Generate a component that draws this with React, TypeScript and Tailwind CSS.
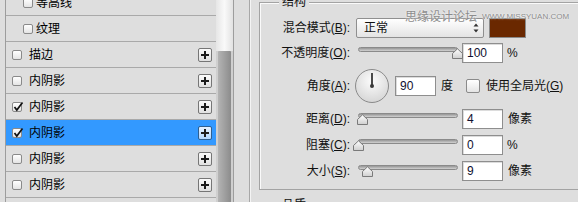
import React from "react";

type Row = {
  label: string;
  indent?: boolean;
  checked?: boolean;
  selected?: boolean;
  plus?: boolean;
};

const rows: Row[] = [
  { label: "等高线", indent: true },
  { label: "纹理", indent: true },
  { label: "描边", plus: true },
  { label: "内阴影", plus: true },
  { label: "内阴影", checked: true, plus: true },
  { label: "内阴影", checked: true, selected: true, plus: true },
  { label: "内阴影", plus: true },
  { label: "内阴影", plus: true },
];

function CheckBox({ checked, big }: { checked?: boolean; big?: boolean }) {
  return (
    <div
      className={`relative shrink-0 rounded-[2px] border border-[#8a8a8a] bg-gradient-to-b from-[#ffffff] to-[#e4e4e4] ${
        big ? "h-[14px] w-[14px]" : "h-[10px] w-[10px]"
      }`}
    >
      {checked && (
        <svg className="absolute left-[0px] top-[-2px] overflow-visible" width="11" height="11" viewBox="0 0 11 11">
          <path d="M1.5 6 L3.8 9 L9.5 1.5" fill="none" stroke="#111" strokeWidth="1.7" />
        </svg>
      )}
    </div>
  );
}

function PlusButton({ active }: { active?: boolean }) {
  return (
    <div
      className={`ml-auto mr-[4px] flex h-[14px] w-[14px] items-center justify-center rounded-[2px] border ${
        active
          ? "border-[#2f5f8f] bg-gradient-to-b from-[#e6f2ff] to-[#b2d7ff]"
          : "border-[#767676] bg-gradient-to-b from-[#fbfbfb] to-[#e0e0e0]"
      }`}
    >
      <svg width="10" height="10" viewBox="0 0 10 10">
        <path d="M5 1v8M1 5h8" stroke="#1c1c1c" strokeWidth="2" />
      </svg>
    </div>
  );
}

function Label({ text, k, w = "w-[90px]" }: { text: string; k: string; w?: string }) {
  return (
    <div className={`${w} shrink-0 text-right text-[12px] text-[#111]`}>
      {text}(<span className="underline">{k}</span>):
    </div>
  );
}

function Field({ value }: { value: string }) {
  return (
    <div className="flex h-[20px] w-[41px] shrink-0 items-center border border-[#8e8e8e] bg-white pl-[4px] text-[12px] text-[#101030] shadow-[inset_1px_1px_0_#dcdcdc]">
      {value}
    </div>
  );
}

function Slider({ thumb }: { thumb: number }) {
  return (
    <div className="relative ml-[8px] h-[20px] w-[104px] shrink-0">
      <div className="absolute left-0 top-[4px] h-[5px] w-[100px] rounded-full border border-[#8a8a8a] bg-gradient-to-b from-[#969696] to-[#d2d2d2]" />
      <svg className="absolute top-[5px]" style={{ left: thumb }} width="11" height="11" viewBox="0 0 11 11">
        <defs>
          <linearGradient id="tg" x1="0" y1="0" x2="0" y2="1">
            <stop offset="0" stopColor="#ffffff" />
            <stop offset="1" stopColor="#cfcfcf" />
          </linearGradient>
        </defs>
        <path d="M0.5 10.5 V5.5 L5.5 0.8 L10.5 5.5 V10.5 Z" fill="url(#tg)" stroke="#7a7a7a" />
      </svg>
    </div>
  );
}

function Dial() {
  return (
    <svg className="ml-[5px] shrink-0" width="34" height="34" viewBox="0 0 34 34">
      <defs>
        <radialGradient id="dg" cx="50%" cy="35%" r="65%">
          <stop offset="0" stopColor="#fcfcfc" />
          <stop offset="1" stopColor="#d6d6d6" />
        </radialGradient>
      </defs>
      <circle cx="17" cy="17" r="16.5" fill="url(#dg)" stroke="#8a8a8a" />
      <line x1="17" y1="17" x2="17" y2="4" stroke="#4a4a4a" strokeWidth="2" />
      <circle cx="17" cy="17" r="2" fill="#3a3a3a" />
    </svg>
  );
}

export default function App() {
  return (
    <div className="relative flex h-[202px] w-[578px] overflow-hidden bg-[#dedede] font-['Liberation_Sans','Noto_Sans_CJK_SC',sans-serif] text-[12px] text-[#111]">
      {/* style list */}
      <div className="ml-[5px] flex h-full shrink-0 border-x border-[#9d9d9d]">
        <div className="mt-[-10px] w-[210px]">
          {rows.map((r, i) => (
            <div
              key={i}
              className={`flex h-[26px] items-center border-b border-[#a9a9a9] ${
                r.selected ? "bg-[#3399ff]" : ""
              } ${r.indent ? "pl-[17px]" : "pl-[6px]"}`}
            >
              <CheckBox checked={r.checked} />
              <span className={`${r.indent ? "ml-[3px]" : "ml-[7px]"} text-[12px] text-black`}>{r.label}</span>
              {r.plus && <PlusButton active={r.selected} />}
            </div>
          ))}
        </div>
        <div className="flex w-[17px] flex-col bg-[#cfcfcf]">
          <div className="h-[51px] bg-gradient-to-r from-[#e6e6e6] via-[#f9f9f9] to-[#e2e2e2]" />
          <div className="mx-[2px] flex-1 rounded-t-[1px] bg-gradient-to-r from-[#b4b4b4] via-[#a0a0a0] to-[#8c8c8c]" />
        </div>
      </div>

      {/* settings */}
      <div className="ml-[15px] h-full flex-1 border-l border-[#a8a8a8] pl-[9px] pt-[2px] shadow-[inset_1px_0_0_#f4f4f4]">
        <div className="relative h-[188px] w-[340px] border border-[#a3a3a3] pt-[15px] shadow-[inset_1px_1px_0_#fafafa]">
          <span className="absolute left-[19px] top-[-8px] bg-[#dedede] px-[3px] leading-[14px]">结构</span>

          <div className="flex h-[20px] items-center">
            <Label text="混合模式" k="B" />
            <div className="ml-[6px] flex h-[20px] w-[128px] items-center justify-between rounded-[2px] border border-[#8f8f8f] bg-gradient-to-b from-[#ffffff] to-[#e4e4e4] pl-[7px] pr-[4px]">
              <span>正常</span>
              <svg width="6" height="10" viewBox="0 0 6 10">
                <path d="M3 0.5 L5.5 3.5 H0.5Z M3 9.5 L5.5 6.5 H0.5Z" fill="#333" />
              </svg>
            </div>
            <div className="ml-[5px] h-[20px] w-[37px] border border-[#8a8a8a] bg-[#6a2800]" />
          </div>

          <div className="mt-[5px] flex h-[20px] items-center">
            <Label text="不透明度" k="O" />
            <Slider thumb={94} />
            <Field value="100" />
            <span className="ml-[4px]">%</span>
          </div>

          <div className="mt-[6px] flex h-[34px] items-center">
            <Label text="角度" k="A" />
            <Dial />
            <div className="ml-[6px]">
              <Field value="90" />
            </div>
            <span className="ml-[5px]">度</span>
            <div className="ml-[13px]">
              <CheckBox big />
            </div>
            <span className="ml-[6px]">
              使用全局光(<span className="underline">G</span>)
            </span>
          </div>

          <div className="mt-[6px] flex h-[20px] items-center">
            <Label text="距离" k="D" />
            <Slider thumb={-1} />
            <Field value="4" />
            <span className="ml-[5px]">像素</span>
          </div>

          <div className="mt-[6px] flex h-[20px] items-center">
            <Label text="阻塞" k="C" />
            <Slider thumb={-5} />
            <Field value="0" />
            <span className="ml-[4px]">%</span>
          </div>

          <div className="mt-[6px] flex h-[20px] items-center">
            <Label text="大小" k="S" />
            <Slider thumb={4} />
            <Field value="9" />
            <span className="ml-[5px]">像素</span>
          </div>
        </div>

        <div className="relative mt-[15px] h-[60px] w-[340px] border border-[#a3a3a3]">
          <span className="absolute left-[19px] top-[-8px] bg-[#dedede] px-[3px] leading-[14px]">品质</span>
        </div>
      </div>

      {/* watermark */}
      <div className="absolute left-[405px] top-[8px] flex items-center text-[#8c8c8c] [text-shadow:0_0_2px_#fff]">
        <span className="text-[12px]">思缘设计论坛</span>
        <span className="ml-[5px] text-[8px]">WWW.MISSYUAN.COM</span>
      </div>
    </div>
  );
}
